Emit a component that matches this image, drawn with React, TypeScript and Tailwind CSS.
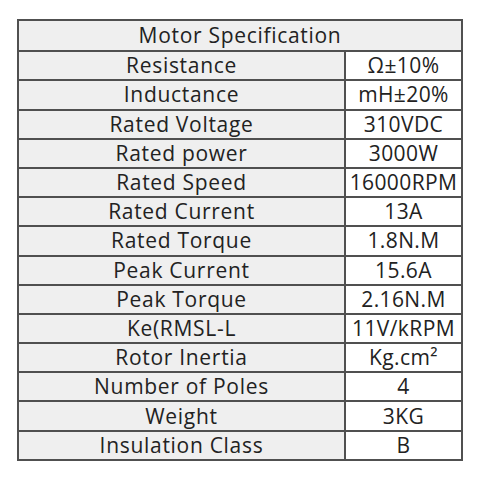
import React from "react";

const rows: [string, string][] = [
  ["Resistance", "Ω±10%"],
  ["Inductance", "mH±20%"],
  ["Rated Voltage", "310VDC"],
  ["Rated power", "3000W"],
  ["Rated Speed", "16000RPM"],
  ["Rated Current", "13A"],
  ["Rated Torque", "1.8N.M"],
  ["Peak Current", "15.6A"],
  ["Peak Torque", "2.16N.M"],
  ["Ke(RMSL-L", "11V/kRPM"],
  ["Rotor Inertia", "Kg.cm²"],
  ["Number of Poles", "4"],
  ["Weight", "3KG"],
  ["Insulation Class", "B"],
];

export default function App() {
  return (
    <div className="w-[480px] h-[480px] bg-white pt-[19px] pl-[17px]" style={{ fontFamily: '"Open Sans", "DejaVu Sans", sans-serif' }}>
      <div className="w-[446px] border-2 border-[#505050] text-[#222] text-[21px] tracking-[0.7px] leading-none">
        <div className="h-[29.2px] flex items-center justify-center bg-[#efefef]">Motor Specification</div>
        {rows.map(([k, v]) => (
          <div key={k} className="h-[29.2px] flex border-t-2 border-[#505050]">
            <div className="w-[327px] border-r-2 border-[#505050] bg-[#efefef] flex items-center justify-center">{k}</div>
            <div className="flex-1 bg-white flex items-center justify-center tracking-[0.4px]">{v}</div>
          </div>
        ))}
      </div>
    </div>
  );
}
